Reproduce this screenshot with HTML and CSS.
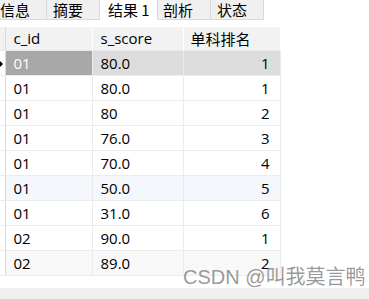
FILE: index.html
```html
<!DOCTYPE html>
<html lang="zh">
<head>
<meta charset="utf-8">
<link rel="stylesheet" href="styles.css">
</head>
<body>
<div class="page">
  <div class="tabs">
    <div class="tab first">信息</div>
    <div class="tab t2">摘要</div>
    <div class="tab active">结果 1</div>
    <div class="tab t4">剖析</div>
    <div class="tab t5">状态</div>
    <div class="tabfill"></div>
  </div>
  <div class="gridwrap">
    <table class="grid">
      <thead>
        <tr><th class="rh"></th><th class="c1">c_id</th><th class="c2">s_score</th><th class="c3">单科排名</th></tr>
      </thead>
      <tbody>
        <tr class="cur"><td class="rh"><span class="ptr"></span></td><td class="sel">01</td><td>80.0</td><td class="num">1</td></tr>
        <tr><td class="rh"></td><td>01</td><td>80.0</td><td class="num">1</td></tr>
        <tr><td class="rh"></td><td>01</td><td>80</td><td class="num">2</td></tr>
        <tr><td class="rh"></td><td>01</td><td>76.0</td><td class="num">3</td></tr>
        <tr><td class="rh"></td><td>01</td><td>70.0</td><td class="num">4</td></tr>
        <tr class="hover"><td class="rh"></td><td>01</td><td>50.0</td><td class="num">5</td></tr>
        <tr><td class="rh"></td><td>01</td><td>31.0</td><td class="num">6</td></tr>
        <tr><td class="rh"></td><td>02</td><td>90.0</td><td class="num">1</td></tr>
        <tr class="last"><td class="rh"></td><td>02</td><td>89.0</td><td class="num">2</td></tr>
      </tbody>
    </table>
  </div>
  <div class="statusbar"></div>
  <div class="watermark">CSDN @叫我莫言鸭</div>
</div>
</body>
</html>
```
FILE: styles.css
```css
html, body {
  margin: 0;
  padding: 0;
  background: #ffffff;
  overflow: hidden;
}
.page {
  position: relative;
  width: 369px;
  height: 299px;
  font-family: "Open Sans", "Noto Sans CJK SC", sans-serif;
  font-size: 15px;
  color: #000;
  display: flex;
  flex-direction: column;
}
.tabs {
  display: flex;
  height: 20px;
  background: #ffffff;
  font-family: "Noto Sans CJK SC", sans-serif;
  font-size: 15px;
  line-height: 19px;
}
.tab {
  box-sizing: border-box;
  height: 20px;
  padding-left: 6px;
  background: #f0f0f0;
  border-right: 1px solid #d9d9d9;
  border-bottom: 1px solid #d9d9d9;
  white-space: nowrap;
  overflow: hidden;
}
.tab.first { width: 47px; padding-left: 0; }
.tab.t2 { width: 53px; }
.tab.active {
  width: 58px;
  background: #ffffff;
  padding-left: 8px;
  border-bottom: 1px solid #ffffff;
}
.tab.t4 { width: 53px; padding-left: 5px; }
.tab.t5 { width: 53px; padding-left: 6px; }
.tabfill { flex: 1; }
.gridwrap {
  padding-top: 7px;
  height: 261px;
}
.grid {
  border-collapse: collapse;
  table-layout: fixed;
  width: 280px;
}
.grid th, .grid td {
  box-sizing: border-box;
  padding: 0 0 0 8px;
  text-align: left;
  font-weight: normal;
  white-space: nowrap;
  border-right: 1px solid #ececec;
  border-bottom: 1px solid #ececec;
}
.grid th {
  height: 23px;
  background: #f2f2f2;
  border-right: 1px solid #ffffff;
  border-bottom: 1px solid #e8e8e8;
}
.grid td { height: 25px; }
.grid .rh {
  width: 5px;
  padding: 0;
  position: relative;
  background: #ffffff;
  border-right: 1px solid #d9d9d9;
}
.grid th.rh { background: #f2f2f2; }
.c1 { width: 87px; }
.c2 { width: 91px; }
.c3 { width: 97px; padding-left: 7px !important; }
.grid td.num { text-align: right; padding: 0 10px 0 0; }
.cur td { background: #dcdcdc; }
.cur td.sel { background: #a8a8a8; color: #ffffff; }
.cur td.rh { background: #ffffff; }
.hover td { background: #f4f8fd; }
.hover td.rh { background: #ffffff; }
.last td { background: #f8f8f8; }
.last td.rh { background: #ffffff; }
.ptr {
  position: absolute;
  left: 0;
  top: 10px;
  width: 0;
  height: 0;
  border-top: 3px solid transparent;
  border-bottom: 3px solid transparent;
  border-left: 3px solid #000;
}
.statusbar {
  flex: 1;
  background: #f0f0f0;
}
.watermark {
  position: absolute;
  left: 183px;
  top: 263px;
  font-family: "Liberation Sans", "Noto Sans CJK SC", sans-serif;
  font-size: 20px;
  line-height: 28px;
  color: rgba(120, 120, 120, 0.75);
  white-space: nowrap;
}
```
